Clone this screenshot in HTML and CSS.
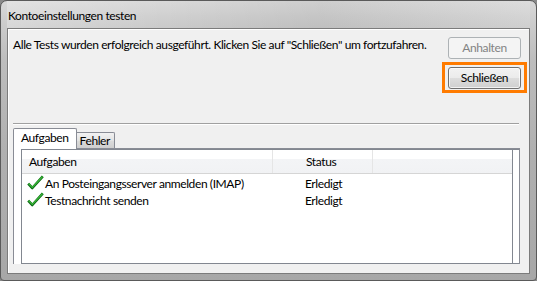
FILE: index.html
```html
<!DOCTYPE html>
<html lang="de">
<head>
<meta charset="utf-8">
<link rel="stylesheet" href="styles.css">
</head>
<body>
<div class="window">
  <div class="titlebar"><span class="title">Kontoeinstellungen testen</span></div>
  <div class="client">
    <div class="top">
      <div class="message">Alle Tests wurden erfolgreich ausgeführt. Klicken Sie auf "Schließen" um fortzufahren.</div>
      <div class="buttons">
        <div class="btn disabled">Anhalten</div>
        <div class="focus-ring"><div class="btn">Schließen</div></div>
      </div>
    </div>
    <div class="separator"></div>
    <div class="tabs">
      <div class="tab active">Aufgaben</div>
      <div class="tab">Fehler</div>
    </div>
    <div class="panel">
      <div class="list">
        <div class="list-inner">
          <div class="header">
            <div class="col c1">Aufgaben</div>
            <div class="col c2">Status</div>
            <div class="col c3"></div>
          </div>
          <div class="row">
            <div class="cell c1"><svg class="check" width="17" height="15" viewBox="0 0 17 15"><path d="M1.2 8.6 L5.3 13 L15.8 1.4" fill="none" stroke="#0b6b14" stroke-width="2.6" stroke-linejoin="round"/><path d="M1.6 8.6 L5.3 12.4 L15.6 1.5" fill="none" stroke="#3cb93a" stroke-width="1.1"/></svg>An Posteingangsserver anmelden (IMAP)</div>
            <div class="cell c2">Erledigt</div>
          </div>
          <div class="row">
            <div class="cell c1"><svg class="check" width="17" height="15" viewBox="0 0 17 15"><path d="M1.2 8.6 L5.3 13 L15.8 1.4" fill="none" stroke="#0b6b14" stroke-width="2.6" stroke-linejoin="round"/><path d="M1.6 8.6 L5.3 12.4 L15.6 1.5" fill="none" stroke="#3cb93a" stroke-width="1.1"/></svg>Testnachricht senden</div>
            <div class="cell c2">Erledigt</div>
          </div>
        </div>
        <div class="list-gutter"></div>
      </div>
    </div>
  </div>
</div>
</body>
</html>
```
FILE: styles.css
```css
* { box-sizing: border-box; }
html, body { margin: 0; padding: 0; }
body {
  width: 537px;
  height: 281px;
  overflow: hidden;
  background: #8a8a8a;
  font-family: Lato, "Liberation Sans", sans-serif;
  font-size: 12px;
  letter-spacing: -0.4px;
  color: #000;
}
.window {
  width: 537px;
  height: 281px;
  border: 1px solid #5a5a5a;
  border-radius: 7px 7px 4px 4px;
  background: linear-gradient(180deg, #d9d9d9 0px, #cdcdcd 20px, #bdbdbd 60px, #b0b0b0 150px, #a7a7a7 281px);
  padding: 0 6px 6px 6px;
  display: flex;
  flex-direction: column;
}
.titlebar {
  height: 27px;
  display: flex;
  align-items: center;
  padding-left: 1px;
  background: linear-gradient(90deg, rgba(255,255,255,0.25), rgba(255,255,255,0) 30%, rgba(0,0,0,0.05) 60%, rgba(255,255,255,0.1));
}
.title {
  color: #000;
  position: relative;
  top: 1px;
}
.client {
  flex: 1;
  background: #f0f0f0;
  border: 1px solid #7b7b7b;
  box-shadow: inset 1px 1px 0 #ffffff;
  padding: 0 0 0 5px;
  display: flex;
  flex-direction: column;
}
.top {
  display: flex;
  justify-content: space-between;
  height: 94px;
}
.message {
  flex: 1;
  min-width: 0;
  padding-top: 8px;
  line-height: 16px;
  white-space: nowrap;
}
.buttons {
  flex: none;
  display: flex;
  flex-direction: column;
  align-items: center;
  padding-top: 8px;
  width: 85px;
  margin-right: 2px;
}
.btn {
  width: 73px;
  height: 22px;
  border: 1px solid #707070;
  border-radius: 3px;
  background: linear-gradient(180deg, #f2f2f2 0%, #ebebeb 49%, #dddddd 50%, #cfcfcf 100%);
  box-shadow: inset 0 0 0 1px rgba(255,255,255,0.7);
  display: flex;
  align-items: center;
  justify-content: center;
  line-height: 14px;
  white-space: nowrap;
}
.btn.disabled {
  background: #f4f4f4;
  border-color: #adb2b5;
  color: #838383;
  box-shadow: none;
}
.focus-ring {
  margin-top: 3px;
  border: 3px solid #ff7b00;
  padding: 2px 3px 1px 3px;
}
.separator {
  height: 2px;
  border-top: 1px solid #a0a0a0;
  border-bottom: 1px solid #ffffff;
  margin-right: 10px;
}
.tabs {
  display: flex;
  align-items: flex-end;
  height: 20px;
  margin-top: 3px;
  position: relative;
  z-index: 1;
}
.tab {
  height: 16px;
  padding: 0 4px 0 3px;
  border: 1px solid #898c95;
  border-bottom: none;
  border-left: none;
  background: linear-gradient(180deg, #f2f2f2, #e3e3e3 50%, #dbdbdb 51%, #cfcfcf);
  line-height: 15px;
  border-radius: 0 2px 0 0;
  white-space: nowrap;
}
.tab.active {
  height: 21px;
  padding: 0 7px 0 7px;
  background: #ffffff;
  border-left: 1px solid #898c95;
  border-radius: 2px 2px 0 0;
  margin-bottom: -1px;
  line-height: 18px;
}
.panel {
  height: 116px;
  width: 507px;
  background: #ffffff;
  border: 1px solid #898c95;
  border-bottom: none;
  padding: 0 0 0 7px;
}
.list {
  height: 115px;
  border-left: 1px solid #828790;
  border-top: 1px solid #828790;
  border-bottom: 1px solid #828790;
  display: flex;
}
.list-inner {
  flex: 1;
  border-right: 1px solid #828790;
}
.list-gutter {
  width: 6px;
}
.header {
  display: flex;
  height: 24px;
  margin-bottom: 1px;
  background: linear-gradient(180deg, #ffffff 0%, #ffffff 40%, #f3f4f6 41%, #f1f2f4 100%);
  border-bottom: 1px solid #d5d5d5;
}
.col {
  line-height: 24px;
  border-right: 1px solid #e5e5e5;
  white-space: nowrap;
}
.col.c1 { width: 251px; padding-left: 7px; }
.col.c2 { width: 100px; padding-left: 33px; }
.col.c3 { width: 10px; border-right: none; }
.row {
  display: flex;
  height: 17px;
  line-height: 17px;
  white-space: nowrap;
}
.cell.c1 {
  width: 251px;
  padding-left: 5px;
  display: flex;
  align-items: center;
}
.check { margin-right: 1px; margin-top: -2px; flex: none; }
.cell.c2 {
  padding-left: 32px;
}
```
